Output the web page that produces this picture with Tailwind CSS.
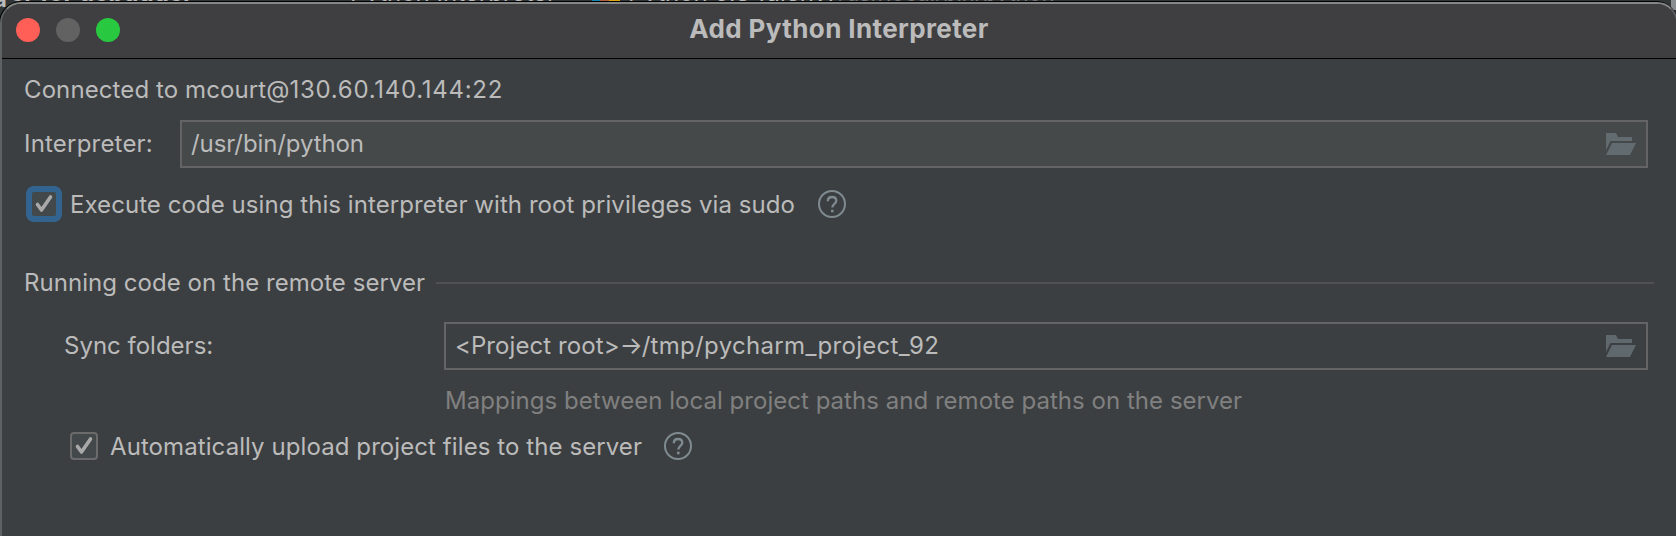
<!DOCTYPE html>
<html lang="en">
<head>
<meta charset="utf-8">
<title>Add Python Interpreter</title>
<script src="https://cdn.jsdelivr.net/npm/@tailwindcss/browser@4"></script>
</head>
<body class="w-[1676px] h-[536px] overflow-hidden bg-[#3c3f41] font-[Inter,sans-serif] text-[24px] leading-[32px] text-[#bbbbbb]">
<div class="relative h-[536px] overflow-hidden bg-[#323637]">
  <!-- window behind the dialog -->
  <div class="absolute inset-x-0 top-0 h-[20px] overflow-hidden whitespace-nowrap">
    <span class="absolute left-[-6px] top-[-17px] text-[22px] font-bold">a</span>
    <span class="absolute left-[10px] top-[-23px] font-bold">er for debugger</span>
    <span class="absolute left-[350px] top-[-23px]">Python Interpreter</span>
    <span class="absolute left-[592px] top-0 flex h-px w-[28px]"><i class="w-[8px] bg-[#0f87b5]"></i><i class="w-[9px] bg-[#b35b43]"></i><i class="w-[11px] bg-[#dca80f]"></i></span>
    <span class="absolute left-[628px] top-[-23px]">Python 3.8 (dlenv)</span>
    <span class="absolute left-[838px] top-[-23px] text-[22px] text-[#777777]">/usr/local/bin/python</span>
    <span class="absolute right-0 top-0 h-[10px] w-[5px] bg-[#8b8e90]"></span>
  </div>

  <!-- dialog -->
  <div class="relative -ml-px mt-px h-[560px] w-[1679px] overflow-hidden rounded-t-[22px] bg-black pl-px pt-px">
    <div class="h-full w-full overflow-hidden rounded-t-[21px] border-2 border-[#5f6263] border-t-[#858786] bg-[#3c3f41]">
      <header class="relative flex h-[55px] items-start border-b border-black bg-[#3f3f41] pl-[14px] pt-[14px]">
        <div class="flex gap-4">
          <i class="size-6 rounded-full bg-[#ff5f57]"></i>
          <i class="size-6 rounded-full bg-[#626263]"></i>
          <i class="size-6 rounded-full bg-[#28c840]"></i>
        </div>
        <h1 class="absolute inset-x-0 top-[9px] text-center text-[26px] font-bold tracking-[0.38px]">Add Python Interpreter</h1>
      </header>

      <main class="pl-[22px] pt-[15px]">
        <p class="tracking-[0.1px]">Connected to mcourt@<span class="tracking-[0.72px]">130.60.140.144:22</span></p>

        <div class="mt-[14px] flex h-12 items-center">
          <label class="w-[156px] tracking-[0.2px]">Interpreter:</label>
          <div class="flex h-12 w-[1468px] items-center justify-between border-2 border-[#646464] bg-[#45494a] pl-[9px] pr-[10px]">
            <span class="tracking-[-0.1px]">/usr/bin/python</span>
            <svg class="h-[22px] w-[30px]" viewBox="0 0 30 22" fill="#626b70"><path d="M0 0h10l2 4h14v4H4.500L0 17z"/><path d="M6 10h24l-6 12H0z"/></svg>
          </div>
        </div>

        <div class="mt-[18px] flex h-9 items-center pl-[2px]">
          <span class="flex size-9 items-center justify-center rounded-[8px] bg-[#32648f]">
            <svg class="size-6" viewBox="0 0 24 24"><rect width="24" height="24" rx="2" fill="#43494a"/><path d="M5.500 12.500L9.500 18L18.500 5" fill="none" stroke="#a9a9a9" stroke-width="3.600" stroke-linecap="round" stroke-linejoin="round"/></svg>
          </span>
          <span class="ml-2 pt-[2px] tracking-[0.062px]">Execute code using this interpreter with root privileges via sudo</span>
          <svg class="ml-[23px] h-7 w-7 -mt-px" viewBox="0 0 28 28" fill="none" stroke="#7f8b91" stroke-width="2"><circle cx="14" cy="14" r="13"/><path d="M9.800 11.300C9.800 8.700 11.500 7 14.100 7C16.600 7 18.300 8.600 18.300 10.800C18.300 13.700 14.300 14.100 14.300 17.500" stroke-width="2.300"/><path d="M13 19.700h2.600v2.600H13z" fill="#7f8b91" stroke="none"/></svg>
        </div>

        <div class="mt-[45px] flex h-8 items-center">
          <h2 class="w-[412px] tracking-[0.044px]">Running code on the remote server</h2>
          <div class="h-[2px] w-[1218px] bg-[#515151]"></div>
        </div>

        <div class="mt-[23px] flex h-12 items-center pl-10">
          <label class="w-[380px] pb-[1px]">Sync folders:</label>
          <div class="flex h-12 w-[1204px] items-center justify-between border-2 border-[#646464] pl-[9px] pr-[10px]">
            <span class="flex pb-[1px]"><span class="tracking-[0.08px]">&lt;Project root&gt;</span><span class="w-[22px]">→</span><span class="tracking-[0.32px]">/tmp/pycharm_project_92</span></span>
            <svg class="h-[22px] w-[30px]" viewBox="0 0 30 22" fill="#5f686d"><path d="M0 0h10l2 4h14v4H4.500L0 17z"/><path d="M6 10h24l-6 12H0z"/></svg>
          </div>
        </div>

        <p class="mt-[15px] pl-[421px] tracking-[0.03px] text-[#808080]">Mappings between local project paths and remote paths on the server</p>

        <div class="mt-[15px] flex h-7 items-center pl-[46px]">
          <svg class="h-7 w-7" viewBox="0 0 28 28"><rect x="1" y="1" width="26" height="26" rx="3" fill="#43494a" stroke="#6b6b6b" stroke-width="2"/><path d="M7.500 14.500L11.500 20L20.500 7" fill="none" stroke="#a9a9a9" stroke-width="3.600" stroke-linecap="round" stroke-linejoin="round"/></svg>
          <span class="ml-3 pt-[2px] tracking-[0.085px]">Automatically upload project files to the server</span>
          <svg class="ml-[22px] h-7 w-7" viewBox="0 0 28 28" fill="none" stroke="#7f8b91" stroke-width="2"><circle cx="14" cy="14" r="13"/><path d="M9.800 11.300C9.800 8.700 11.500 7 14.100 7C16.600 7 18.300 8.600 18.300 10.800C18.300 13.700 14.300 14.100 14.300 17.500" stroke-width="2.300"/><path d="M13 19.700h2.600v2.600H13z" fill="#7f8b91" stroke="none"/></svg>
        </div>
      </main>
    </div>
  </div>
</div>
</body>
</html>
